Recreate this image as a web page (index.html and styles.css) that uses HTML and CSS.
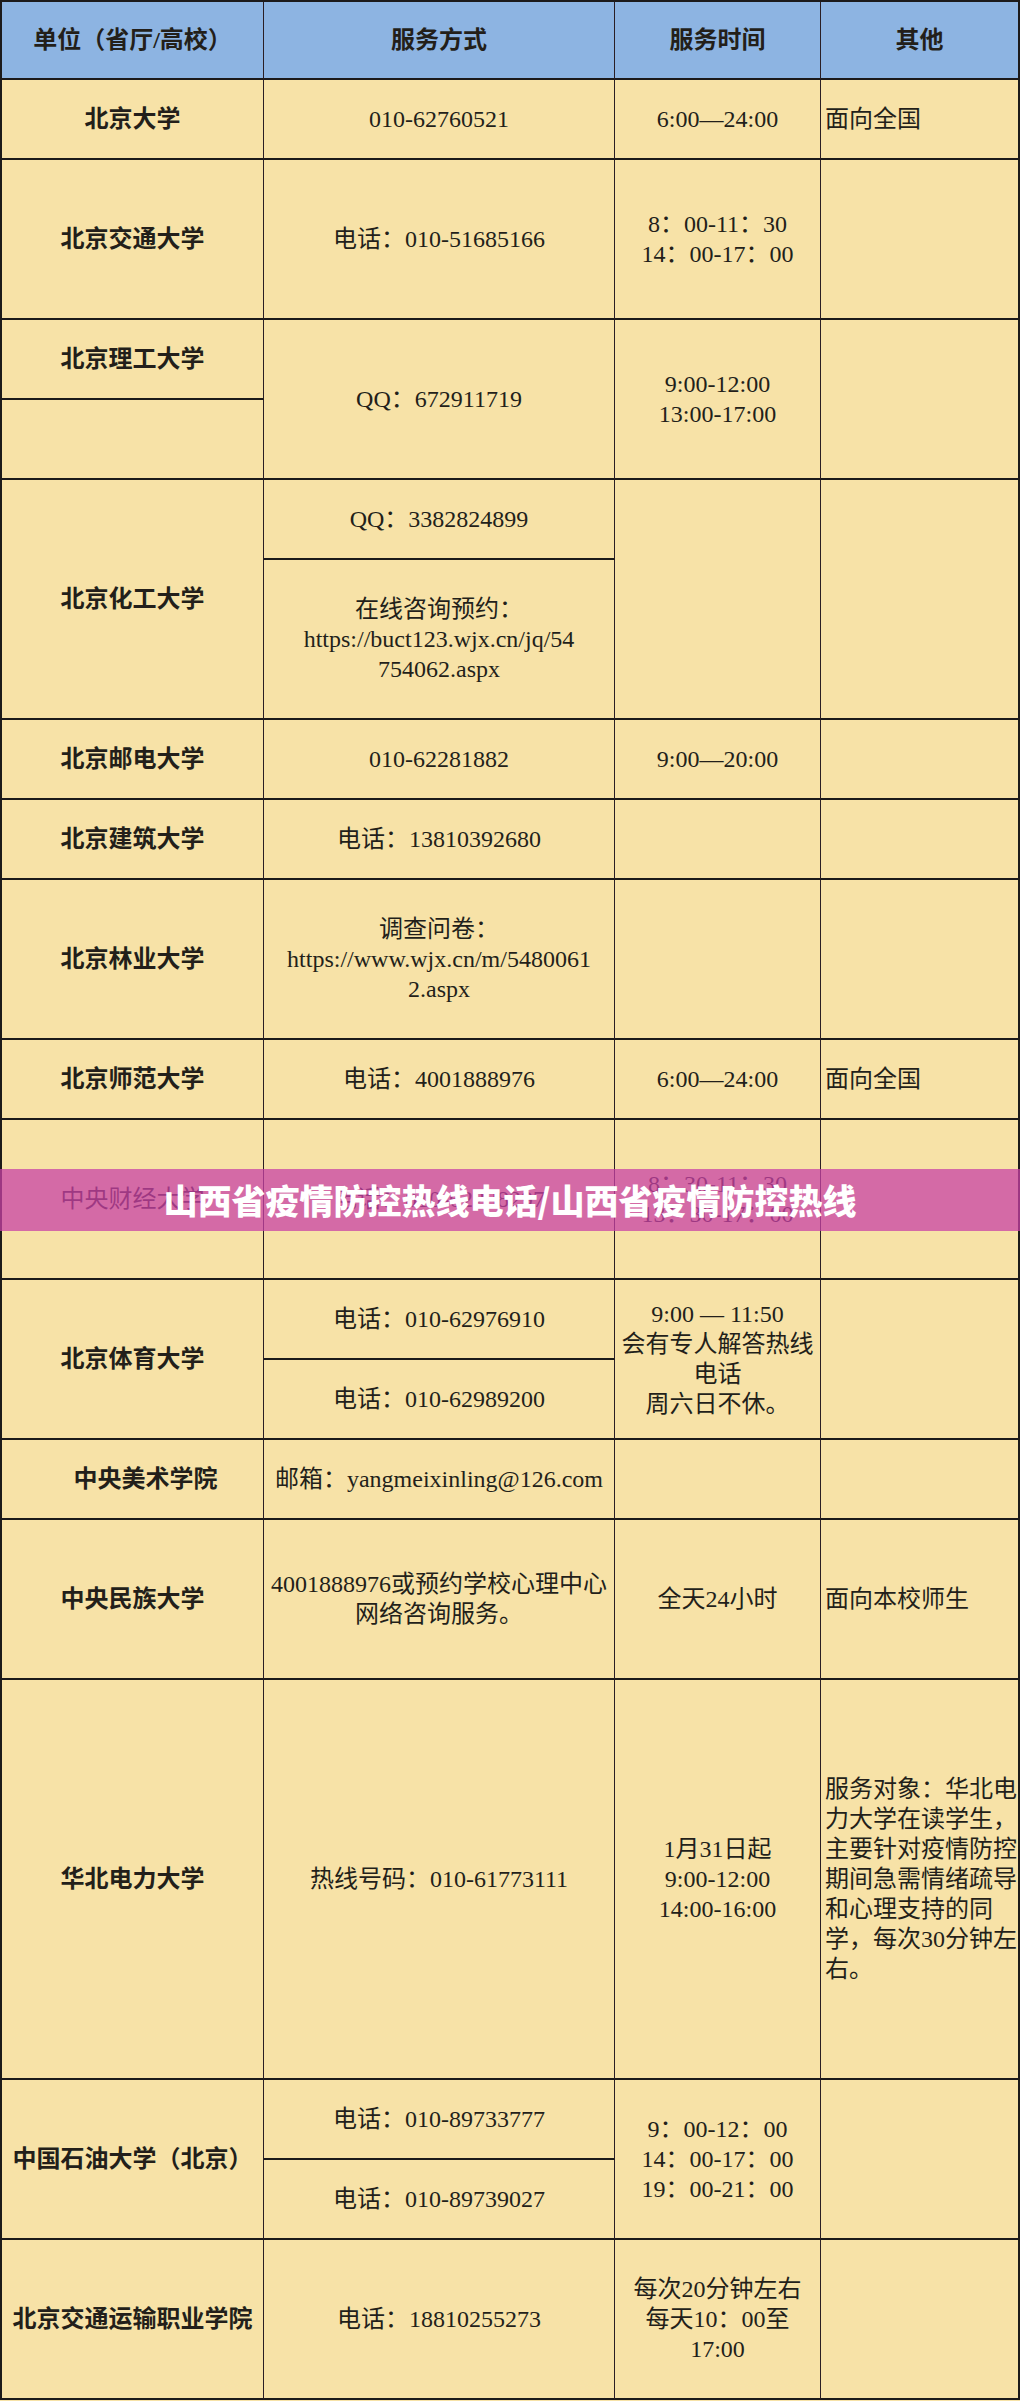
FILE: index.html
```html
<!DOCTYPE html>
<html lang="zh-CN">
<head>
<meta charset="utf-8">
<title>高校心理援助热线</title>
<link rel="stylesheet" href="styles.css">
</head>
<body>
<div class="page">
  <div class="grid">
    <div class="cell head">单位（省厅/高校）</div>
    <div class="cell head">服务方式</div>
    <div class="cell head">服务时间</div>
    <div class="cell head last">其他</div>

    <div class="cell name">北京大学</div>
    <div class="cell">010-62760521</div>
    <div class="cell">6:00—24:00</div>
    <div class="cell note last">面向全国</div>

    <div class="cell name s2">北京交通大学</div>
    <div class="cell s2">电话：010-51685166</div>
    <div class="cell s2">8：00-11：30<br>14：00-17：00</div>
    <div class="cell note last s2"></div>

    <div class="cell name">北京理工大学</div>
    <div class="cell s2">QQ：672911719</div>
    <div class="cell s2">9:00-12:00<br>13:00-17:00</div>
    <div class="cell note last s2"></div>
    <div class="cell name"></div>

    <div class="cell name s3">北京化工大学</div>
    <div class="cell">QQ：3382824899</div>
    <div class="cell s3"></div>
    <div class="cell note last s3"></div>
    <div class="cell s2">在线咨询预约：<br>https://buct123.wjx.cn/jq/54<br>754062.aspx</div>

    <div class="cell name">北京邮电大学</div>
    <div class="cell">010-62281882</div>
    <div class="cell">9:00—20:00</div>
    <div class="cell note last"></div>

    <div class="cell name">北京建筑大学</div>
    <div class="cell">电话：13810392680</div>
    <div class="cell"></div>
    <div class="cell note last"></div>

    <div class="cell name s2">北京林业大学</div>
    <div class="cell s2">调查问卷：<br>https://www.wjx.cn/m/5480061<br>2.aspx</div>
    <div class="cell s2"></div>
    <div class="cell note last s2"></div>

    <div class="cell name">北京师范大学</div>
    <div class="cell">电话：4001888976</div>
    <div class="cell">6:00—24:00</div>
    <div class="cell note last">面向全国</div>

    <div class="cell name light s2">中央财经大学</div>
    <div class="cell s2">电话：010-62288297</div>
    <div class="cell s2">8：30-11：30<br>13：30-17：00</div>
    <div class="cell note last s2"></div>

    <div class="cell name s2">北京体育大学</div>
    <div class="cell">电话：010-62976910</div>
    <div class="cell s2">9:00 — 11:50<br>会有专人解答热线<br>电话<br>周六日不休。</div>
    <div class="cell note last s2"></div>
    <div class="cell">电话：010-62989200</div>

    <div class="cell name shift">中央美术学院</div>
    <div class="cell">邮箱：yangmeixinling@126.com</div>
    <div class="cell"></div>
    <div class="cell note last"></div>

    <div class="cell name s2">中央民族大学</div>
    <div class="cell s2">4001888976或预约学校心理中心<br>网络咨询服务。</div>
    <div class="cell s2">全天24小时</div>
    <div class="cell note last s2">面向本校师生</div>

    <div class="cell name s5">华北电力大学</div>
    <div class="cell s5">热线号码：010-61773111</div>
    <div class="cell s5">1月31日起<br>9:00-12:00<br>14:00-16:00</div>
    <div class="cell note last s5">服务对象：华北电<br>力大学在读学生，<br>主要针对疫情防控<br>期间急需情绪疏导<br>和心理支持的同<br>学，每次30分钟左<br>右。</div>

    <div class="cell name s2">中国石油大学（北京）</div>
    <div class="cell">电话：010-89733777</div>
    <div class="cell s2">9：00-12：00<br>14：00-17：00<br>19：00-21：00</div>
    <div class="cell note last s2"></div>
    <div class="cell">电话：010-89739027</div>

    <div class="cell name s2">北京交通运输职业学院</div>
    <div class="cell s2">电话：18810255273</div>
    <div class="cell s2">每次20分钟左右<br>每天10：00至<br>17:00</div>
    <div class="cell note last s2"></div>
  </div>
  <div class="banner">山西省疫情防控热线电话/山西省疫情防控热线</div>
</div>
</body>
</html>
```

FILE: styles.css
```css
html, body {
  margin: 0;
  padding: 0;
  background: #f7e2a7;
}

.page {
  position: relative;
  width: 1020px;
}

.grid {
  display: grid;
  grid-template-columns: 262px 351px 206px 197px;
  grid-template-rows: 78px repeat(29, 80px);
  border-top: 2px solid #1c1a1a;
  border-left: 2px solid #1c1a1a;
  border-right: 2px solid #1c1a1a;
  background: #f7e2a7;
  font-family: "Liberation Serif", "Noto Sans CJK SC", serif;
  font-size: 24px;
  line-height: 30px;
  color: #231f1a;
}

.cell {
  box-sizing: border-box;
  display: flex;
  align-items: center;
  justify-content: center;
  text-align: center;
  white-space: nowrap;
  border-bottom: 2px solid #1c1a1a;
  border-right: 1px solid #2a1e24;
  padding: 0 2px;
  overflow: hidden;
}

.cell.last {
  border-right: none;
}

.head {
  background: #8db4e2;
  font-weight: 700;
}

.name {
  font-weight: 700;
  padding: 0;
}

.name.light {
  font-weight: 400;
}

.name.shift {
  padding-left: 26px;
}

.note {
  justify-content: flex-start;
  text-align: left;
  padding: 0 0 0 4px;
}

.s2 { grid-row: span 2; }
.s3 { grid-row: span 3; }
.s5 { grid-row: span 5; }

.banner {
  position: absolute;
  left: 0;
  top: 1169px;
  width: 1020px;
  height: 62px;
  display: flex;
  align-items: center;
  justify-content: center;
  background: rgba(200, 66, 166, 0.75);
  color: #ffffff;
  font-family: "Noto Sans CJK SC", "Noto Sans", sans-serif;
  font-weight: 900;
  font-size: 34px;
  line-height: 40px;
}
```
